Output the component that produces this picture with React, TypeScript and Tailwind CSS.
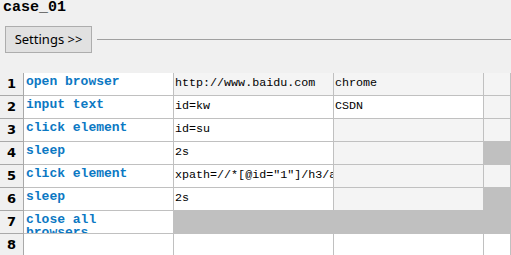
const rows = [
  { kw: "open browser", args: ["http://www.baidu.com", "chrome", ""], bg: ["w", "l", "l", "l"] },
  { kw: "input text", args: ["id=kw", "CSDN", ""], bg: ["w", "w", "w", "l"] },
  { kw: "click element", args: ["id=su", "", ""], bg: ["w", "w", "l", "l"] },
  { kw: "sleep", args: ["2s", "", ""], bg: ["w", "w", "l", "d"] },
  { kw: "click element", args: ['xpath=//*[@id="1"]/h3/a', "", ""], bg: ["w", "w", "l", "l"] },
  { kw: "sleep", args: ["2s", "", ""], bg: ["w", "w", "l", "d"] },
  { kw: "close all browsers", args: ["", "", ""], bg: ["w", "d", "d", "d"] },
  { kw: "", args: ["", "", ""], bg: ["w", "w", "w", "w"] },
];

const bgClass: Record<string, string> = {
  w: "bg-white",
  l: "bg-[#f4f4f4]",
  d: "bg-[#c0c0c0]",
};

const mono = { fontFamily: '"Liberation Mono", "DejaVu Sans Mono", monospace' };

export default function App() {
  return (
    <div className="w-[511px] h-[255px] overflow-hidden bg-[#f0f0f0]">
      <div
        className="h-[16px] pl-[3px] text-[15px] leading-[16px] font-bold text-black"
        style={mono}
      >
        case_01
      </div>

      <div className="mt-[10px] flex items-center pl-[5px]">
        <button
          className="w-[87px] h-[27px] border border-[#adadad] bg-[#e1e1e1] text-[13px] text-black"
          style={{ fontFamily: '"Noto Sans", "Liberation Sans", sans-serif' }}
        >
          Settings &gt;&gt;
        </button>
        <div className="ml-[5px] h-px flex-1 bg-[#a0a0a0]" />
      </div>

      <div className="mt-[20px] grid grid-cols-[24px_150px_160px_150px_1fr]">
        {rows.map((r, i) => (
          <div key={i} className="contents">
            <div
              className="h-[23px] flex items-center justify-center border-r border-b border-[#a9a9a9] bg-[#f0f0f0] text-[13px] font-bold text-black"
              style={{ fontFamily: '"DejaVu Sans", "Liberation Sans", sans-serif' }}
            >
              {i + 1}
            </div>
            <div
              className={`h-[23px] overflow-hidden border-r border-b border-[#c0c0c0] pl-[2px] pr-[14px] pt-[2px] text-[13px] leading-[13px] font-bold text-[#0b78c3] ${bgClass[r.bg[0]]}`}
              style={mono}
            >
              {r.kw}
            </div>
            {r.args.map((a, j) => (
              <div
                key={j}
                className={`h-[23px] overflow-hidden whitespace-nowrap border-r border-b border-[#c0c0c0] pl-[1px] pt-[4px] text-[11.7px] leading-[13px] text-black ${bgClass[r.bg[j + 1]]}`}
                style={mono}
              >
                {a}
              </div>
            ))}
          </div>
        ))}
      </div>
    </div>
  );
}
